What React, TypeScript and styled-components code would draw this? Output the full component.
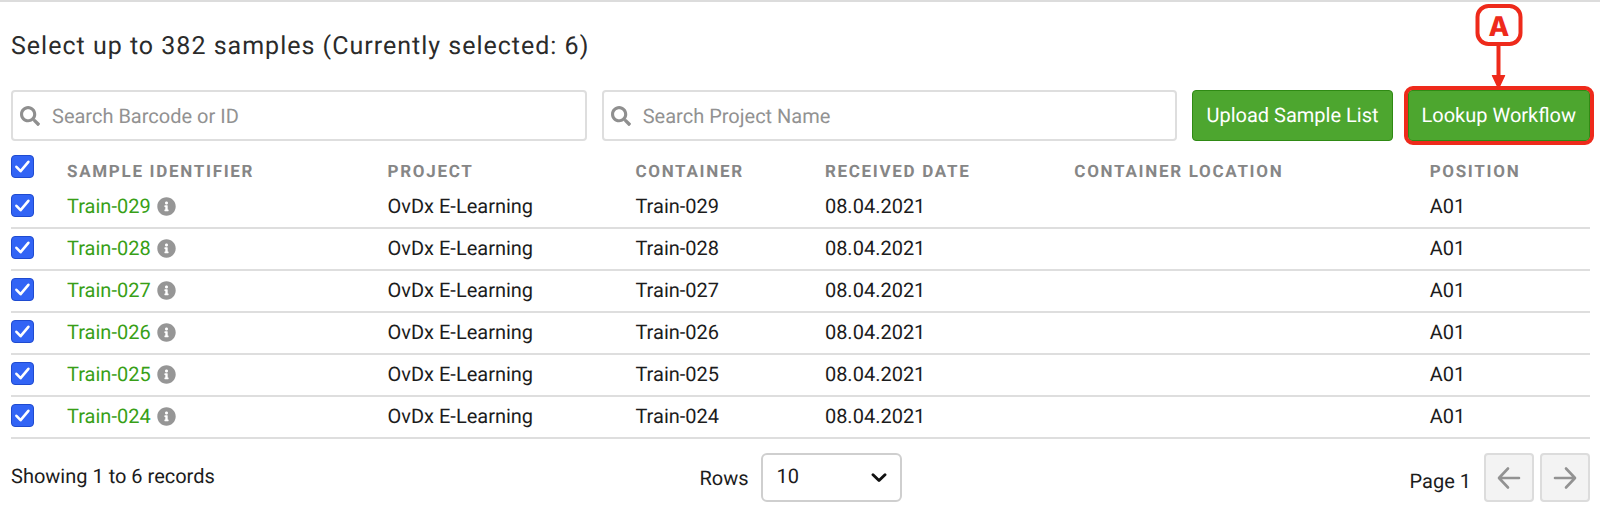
import React, { useState } from "react";
import styled, { createGlobalStyle } from "styled-components";
import { FaInfoCircle, FaSearch } from "react-icons/fa";

const GlobalStyle = createGlobalStyle`
  *, *::before, *::after { box-sizing: border-box; }
  body {
    margin: 0;
    background: #fff;
    color: #1c1c1c;
    font-family: Roboto, "Liberation Sans", sans-serif;
    font-size: 20px;
    line-height: 24px;
    text-rendering: geometricPrecision;
  }
  button, input, select { font: inherit; color: inherit; margin: 0; text-rendering: inherit; }
`;

const Page = styled.main`
  border-top: 2px solid #dcdcdc;
  padding: 29px 10px 11px 11px;
`;

const Title = styled.h1`
  margin: 0 0 27px;
  font-size: 25px;
  font-weight: 400;
  line-height: 32px;
  letter-spacing: 1px;
  color: #2b2b2b;
`;

const Toolbar = styled.form`
  display: flex;
  gap: 15px;
`;

const SearchBox = styled.label`
  flex: 1;
  min-width: 0;
  height: 51px;
  display: flex;
  align-items: center;
  gap: 12px;
  padding: 0 7px;
  border: 2px solid #dedede;
  border-radius: 4px;
  color: #8f8f8f;
  svg { flex: none; }
`;

const SearchInput = styled.input`
  flex: 1;
  min-width: 0;
  padding: 0;
  border: 0;
  outline: 0;
  background: transparent;
  color: #1c1c1c;
  &::placeholder { color: #929292; opacity: 1; }
`;

const ActionButton = styled.button`
  height: 51px;
  padding: 0 13px 2px;
  border: 1px solid #2f8a14;
  border-radius: 4px;
  background: #4da62f;
  color: #fff;
  white-space: nowrap;
`;

const Highlighted = styled.div`
  position: relative;
`;

const HighlightFrame = styled.div`
  position: absolute;
  inset: -4px;
  border: 4px solid #ee2a1b;
  border-radius: 9px;
  pointer-events: none;
`;

const Callout = styled.div`
  position: absolute;
  bottom: 100%;
  left: 50%;
  transform: translateX(-50%);
  display: flex;
  flex-direction: column;
  align-items: center;
  color: #ee2a1b;
  pointer-events: none;
`;

const CalloutLetter = styled.span`
  width: 47px;
  height: 42px;
  display: grid;
  place-items: center;
  padding-top: 3px;
  border: 4px solid #ee2a1b;
  border-radius: 13px;
  background: #fff;
  font-family: Inter, sans-serif;
  font-size: 27px;
  font-weight: 800;
`;

const Table = styled.table`
  width: 100%;
  table-layout: fixed;
  border-collapse: separate;
  border-spacing: 0;
`;

const Column = styled.col<{ $width?: string }>`
  width: ${({ $width }) => $width ?? "auto"};
`;

const HeaderCell = styled.th`
  height: 46px;
  padding: 16px 0 0;
  text-align: left;
  font-size: 17px;
  font-weight: 700;
  letter-spacing: 0.1em;
  color: #868686;
  white-space: nowrap;
`;

const HeaderCheckCell = styled.th`
  padding: 4px 0 0;
  text-align: left;
`;

const Cell = styled.td`
  height: 42px;
  padding: 0 0 2px;
  border-bottom: 2px solid #dedede;
  white-space: nowrap;
`;

const CheckCell = styled(Cell)`
  padding-bottom: 4px;
`;

const SampleLine = styled.span`
  display: flex;
  align-items: center;
  gap: 6px;
  color: #969696;
`;

const SampleLink = styled.a`
  color: #389f17;
  text-decoration: none;
`;

const CheckWrap = styled.span`
  display: grid;
  width: 23px;
  height: 23px;
  > * { grid-area: 1 / 1; }
  svg { pointer-events: none; z-index: 1; }
`;

const CheckInput = styled.input`
  appearance: none;
  width: 23px;
  height: 23px;
  border: 1px solid #8c8c8c;
  border-radius: 4px;
  background: #fff;
  &:checked { background: #3264f5; border-color: #1f4bd0; }
`;

const Footer = styled.footer`
  display: grid;
  grid-template-columns: 1fr auto 1fr;
  align-items: center;
  margin-top: 14px;
`;

const Summary = styled.p`
  margin: 0 0 3px;
`;

const RowsLabel = styled.label`
  display: flex;
  align-items: center;
  gap: 12px;
`;

const SelectWrap = styled.span`
  display: grid;
  align-items: center;
  > * { grid-area: 1 / 1; }
  svg { justify-self: end; margin-right: 15px; pointer-events: none; }
`;

const RowsSelect = styled.select`
  appearance: none;
  width: 141px;
  height: 49px;
  padding: 0 40px 3px 14px;
  border: 2px solid #cfcfcf;
  border-radius: 6px;
  background: #fff;
`;

const Pager = styled.nav`
  display: flex;
  justify-content: flex-end;
  align-items: center;
  gap: 6px;
`;

const PageText = styled.span`
  padding-top: 7px;
  margin-right: 7px;
`;

const PageButton = styled.button`
  width: 50px;
  height: 49px;
  display: grid;
  place-items: center;
  padding: 0;
  border: 2px solid #dcdcdc;
  border-radius: 4px;
  background: #f3f3f3;
  color: #929292;
`;

function Checkbox({ checked, label, onChange }: { checked: boolean; label: string; onChange: () => void }) {
  return (
    <CheckWrap>
      <CheckInput type="checkbox" checked={checked} aria-label={label} onChange={onChange} />
      {checked && (
        <svg width="23" height="23" viewBox="0 0 23 23" fill="none" stroke="#fff" strokeWidth="2.6" strokeLinecap="round" strokeLinejoin="round" aria-hidden="true">
          <path d="M5.4 11.8 9.6 16.2 17.4 6.8" />
        </svg>
      )}
    </CheckWrap>
  );
}

const arrowPaths = {
  left: "M22 12H2.5M11 2.5 2 12l9 9.5",
  right: "M2 12h19.5M13 2.5 22 12l-9 9.5",
};

function Arrow({ direction }: { direction: "left" | "right" }) {
  return (
    <svg width="24" height="24" viewBox="0 0 24 24" fill="none" stroke="currentColor" strokeWidth="2.6" strokeLinecap="round" strokeLinejoin="round" aria-hidden="true">
      <path d={arrowPaths[direction]} />
    </svg>
  );
}

const samples = ["Train-029", "Train-028", "Train-027", "Train-026", "Train-025", "Train-024"];
const headings = ["SAMPLE IDENTIFIER", "PROJECT", "CONTAINER", "RECEIVED DATE", "CONTAINER LOCATION", "POSITION"];
const widths = ["20.3%", "15.7%", "12%", "15.8%", "22.5%"];

export default function App() {
  const [selected, setSelected] = useState<string[]>(samples);
  const allSelected = selected.length === samples.length;
  const toggle = (id: string) =>
    setSelected((now) => (now.includes(id) ? now.filter((s) => s !== id) : [...now, id]));

  return (
    <Page>
      <GlobalStyle />
      <Title>{`Select up to 382 samples (Currently selected: ${selected.length})`}</Title>
      <Toolbar onSubmit={(e) => e.preventDefault()}>
        <SearchBox>
          <FaSearch size={20} aria-hidden="true" />
          <SearchInput type="text" placeholder="Search Barcode or ID" aria-label="Search Barcode or ID" />
        </SearchBox>
        <SearchBox>
          <FaSearch size={20} aria-hidden="true" />
          <SearchInput type="text" placeholder="Search Project Name" aria-label="Search Project Name" />
        </SearchBox>
        <ActionButton type="button">Upload Sample List</ActionButton>
        <Highlighted>
          <ActionButton type="button">Lookup Workflow</ActionButton>
          <HighlightFrame />
          <Callout>
            <CalloutLetter>A</CalloutLetter>
            <svg width="14" height="44" viewBox="0 0 14 44" fill="currentColor" aria-hidden="true">
              <path d="M5 0h4v29h5L7 44 0 29h5z" />
            </svg>
          </Callout>
        </Highlighted>
      </Toolbar>
      <Table>
        <colgroup>
          <Column $width="56px" />
          {widths.map((w, i) => (
            <Column key={i} $width={w} />
          ))}
          <Column />
        </colgroup>
        <thead>
          <tr>
            <HeaderCheckCell>
              <Checkbox
                label="Select all samples"
                checked={allSelected}
                onChange={() => setSelected(allSelected ? [] : samples)}
              />
            </HeaderCheckCell>
            {headings.map((h) => (
              <HeaderCell key={h} scope="col">{h}</HeaderCell>
            ))}
          </tr>
        </thead>
        <tbody>
          {samples.map((id) => (
            <tr key={id}>
              <CheckCell>
                <Checkbox label={`Select ${id}`} checked={selected.includes(id)} onChange={() => toggle(id)} />
              </CheckCell>
              <Cell>
                <SampleLine>
                  <SampleLink href="#">{id}</SampleLink>
                  <FaInfoCircle size={19} aria-hidden="true" />
                </SampleLine>
              </Cell>
              <Cell>OvDx E-Learning</Cell>
              <Cell>{id}</Cell>
              <Cell>08.04.2021</Cell>
              <Cell />
              <Cell>A01</Cell>
            </tr>
          ))}
        </tbody>
      </Table>
      <Footer>
        <Summary>Showing 1 to 6 records</Summary>
        <RowsLabel>
          Rows
          <SelectWrap>
            <RowsSelect defaultValue="10">
              <option>10</option>
              <option>25</option>
              <option>50</option>
            </RowsSelect>
            <svg width="16" height="10" viewBox="0 0 14 9" fill="none" stroke="#111" strokeWidth="2.6" strokeLinecap="round" strokeLinejoin="round" aria-hidden="true">
              <path d="M1.6 1.6 7 6.8l5.4-5.2" />
            </svg>
          </SelectWrap>
        </RowsLabel>
        <Pager aria-label="Pages">
          <PageText>Page 1</PageText>
          <PageButton type="button" aria-label="Previous page"><Arrow direction="left" /></PageButton>
          <PageButton type="button" aria-label="Next page"><Arrow direction="right" /></PageButton>
        </Pager>
      </Footer>
    </Page>
  );
}
